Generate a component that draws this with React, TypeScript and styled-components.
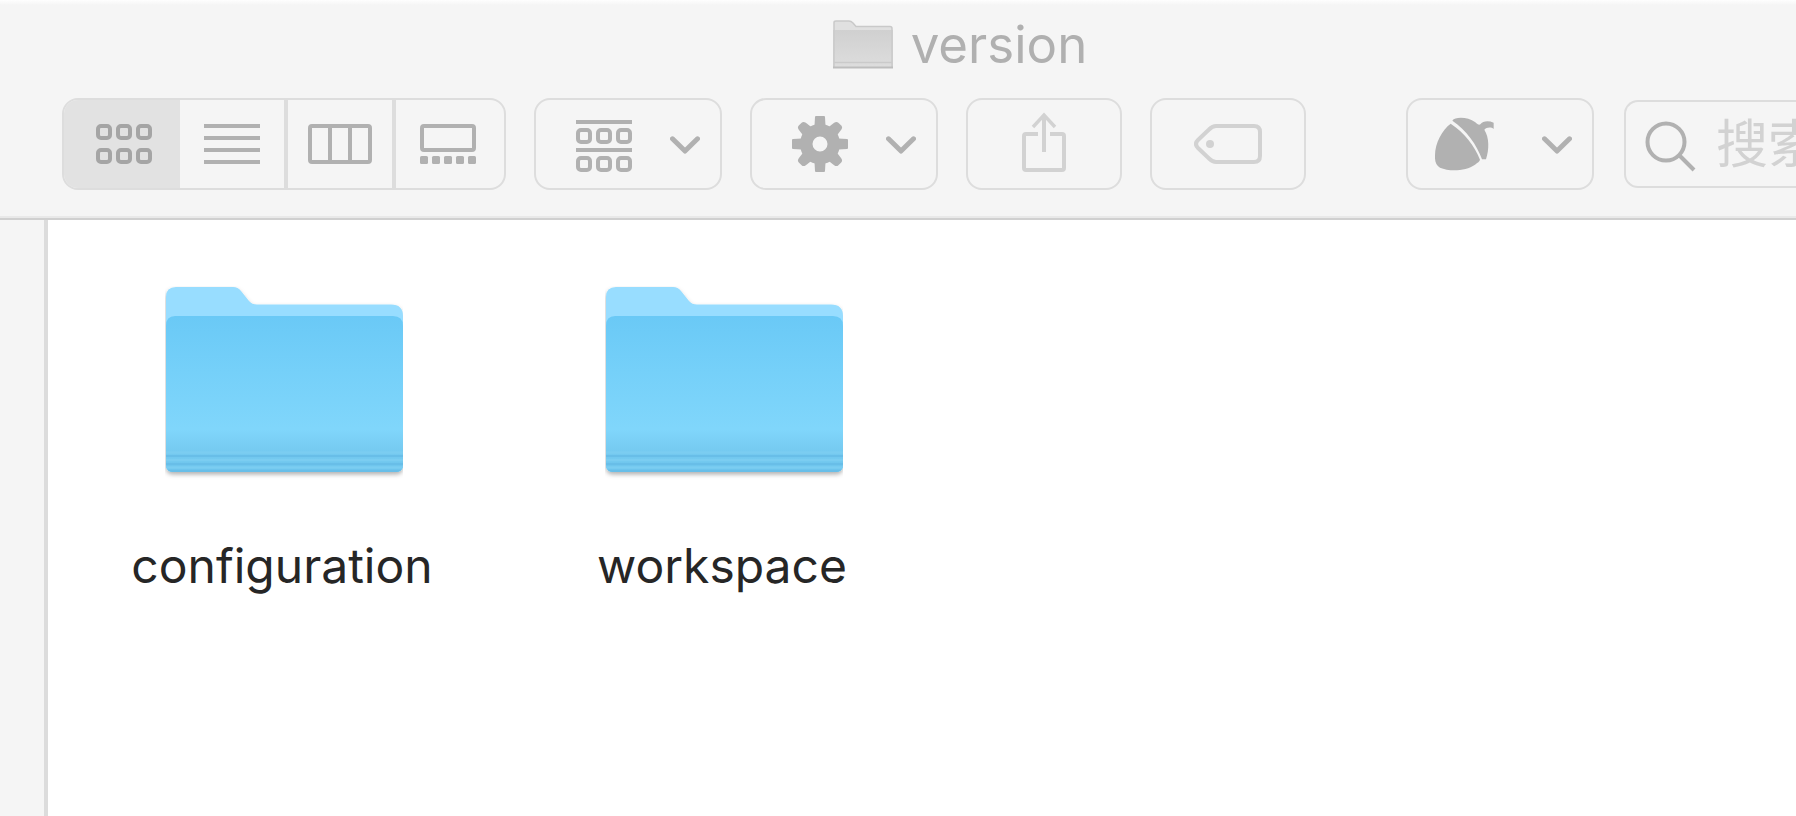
import React from "react";
import styled, { createGlobalStyle } from "styled-components";

const GlobalStyle = createGlobalStyle`
  * { box-sizing: border-box; }
  body {
    margin: 0;
    background: #fff;
    font-family: Inter, "Noto Sans CJK SC", sans-serif;
  }
`;

const Window = styled.div`
  display: flex;
  flex-direction: column;
  min-height: 100vh;
`;

const Header = styled.header`
  display: flex;
  flex-direction: column;
  gap: 8px;
  padding-bottom: 28px;
  background: linear-gradient(#fefefe, #f5f5f5 5px);
  border-bottom: 2px solid #d0d0d0;
  box-shadow: inset 0 -2px 0 #e9e9e9;
`;

const TitleBar = styled.div`
  display: flex;
  align-items: center;
  justify-content: center;
  gap: 18px;
  height: 90px;
  padding-left: 124px;
`;

const Title = styled.h1`
  margin: 0;
  font-size: 51px;
  line-height: 60px;
  font-weight: 400;
  color: #b0b0b0;
`;

const Toolbar = styled.div`
  display: flex;
  align-items: center;
  gap: 28px;
  padding-left: 62px;
`;

const Segments = styled.div`
  display: flex;
  flex: none;
  height: 92px;
  border: 2px solid #dddddd;
  border-radius: 16px;
  overflow: hidden;
`;

const Segment = styled.button<{ $active?: boolean; $divided?: boolean }>`
  display: flex;
  align-items: center;
  justify-content: center;
  width: ${(p) => (p.$active ? 116 : 108)}px;
  padding: 0;
  border: 0;
  border-right: ${(p) => (p.$divided ? "4px solid #dddddd" : "0")};
  background: ${(p) => (p.$active ? "#e2e2e2" : "transparent")};
  color: ${(p) => (p.$active ? "#a5a5a5" : "#b1b1b1")};

  &:first-child {
    padding-left: 4px;
  }

  &:last-child {
    padding-right: 4px;
  }
`;

const ToolButton = styled.button<{ $menu?: boolean; $faint?: boolean; $wide?: boolean }>`
  display: flex;
  flex: none;
  align-items: center;
  justify-content: ${(p) => (p.$menu ? "space-between" : "center")};
  width: ${(p) => (p.$menu ? 188 : 156)}px;
  height: 92px;
  padding: ${(p) => (p.$menu ? `0 20px 0 ${p.$wide ? 27 : 40}px` : "0")};
  border: 2px solid #dddddd;
  border-radius: 16px;
  background: transparent;
  color: ${(p) => (p.$faint ? "#d2d2d2" : "#b1b1b1")};
`;

const Extras = styled.div`
  display: flex;
  flex: 1;
  align-items: center;
  gap: 30px;
  min-width: 0;
  margin-left: 72px;
`;

const SearchField = styled.label`
  display: flex;
  flex: 1;
  align-items: center;
  gap: 20px;
  min-width: 0;
  height: 88px;
  padding-left: 18px;
  border: 2px solid #dddddd;
  border-right: 0;
  border-radius: 14px 0 0 14px;
  color: #b1b1b1;

  svg {
    flex: none;
  }
`;

const SearchInput = styled.input`
  flex: 1;
  min-width: 0;
  height: 80px;
  padding: 0;
  border: 0;
  outline: 0;
  background: transparent;
  font-family: Inter, "Noto Sans CJK SC", sans-serif;
  font-size: 52px;
  color: #555;

  &::placeholder {
    color: #d2d2d2;
    opacity: 1;
  }
`;

const Body = styled.div`
  display: flex;
  flex: 1;
`;

const Sidebar = styled.aside`
  width: 48px;
  flex: none;
  background: #f5f5f5;
  border-right: 4px solid #dcdcdc;
`;

const Files = styled.main`
  display: flex;
  flex: 1;
  flex-wrap: wrap;
  align-content: flex-start;
  padding: 66px 0 0 16px;
`;

const File = styled.figure`
  display: flex;
  flex-direction: column;
  align-items: center;
  gap: 54px;
  width: 440px;
  margin: 0;
`;

const FileName = styled.figcaption`
  padding-right: 4px;
  font-size: 48px;
  line-height: 60px;
  color: #262626;
`;

const tiles = (y: number) =>
  [2, 22, 42].map((x) => (
    <rect key={`${x}-${y}`} x={x} y={y} width="12" height="12" rx="3" fill="none" stroke="currentColor" strokeWidth="4" />
  ));

const GridIcon = () => (
  <svg width="56" height="40" aria-hidden="true">
    {tiles(2)}
    {tiles(26)}
  </svg>
);

const ListIcon = () => (
  <svg width="56" height="40" aria-hidden="true">
    <path d="M0 2H56M0 14H56M0 26H56M0 38H56" stroke="currentColor" strokeWidth="4" />
  </svg>
);

const ColumnsIcon = () => (
  <svg width="64" height="40" aria-hidden="true" fill="none" stroke="currentColor" strokeWidth="4">
    <rect x="2" y="2" width="60" height="36" rx="2" />
    <path d="M22 2V38M42 2V38" />
  </svg>
);

const GalleryIcon = () => (
  <svg width="56" height="40" aria-hidden="true">
    <rect x="2" y="2" width="52" height="24" rx="2" fill="none" stroke="currentColor" strokeWidth="4" />
    {[0, 12, 24, 36, 48].map((x) => (
      <rect key={x} x={x} y="32" width="8" height="8" rx="1.5" fill="currentColor" />
    ))}
  </svg>
);

const GroupIcon = () => (
  <svg width="56" height="56" aria-hidden="true">
    <path d="M0 6H56M0 34H56" stroke="currentColor" strokeWidth="4" />
    {tiles(14)}
    {tiles(42)}
  </svg>
);

const GearIcon = () => (
  <svg width="56" height="56" viewBox="-28 -28 56 56" aria-hidden="true">
    <circle r="13.75" fill="none" stroke="currentColor" strokeWidth="12.5" />
    {[0, 90, 180, 270].map((a) => (
      <path key={a} transform={`rotate(${a})`} d="M-5.5 -18L-5 -27Q-5 -28 -4 -28H4Q5 -28 5 -27L5.5 -18Z" fill="currentColor" />
    ))}
    {[45, 135, 225, 315].map((a) => (
      <path key={a} transform={`rotate(${a})`} d="M-6 -17L-5 -25Q-4.5 -28 -2 -28H2Q4.5 -28 5 -25L6 -17Z" fill="currentColor" />
    ))}
  </svg>
);

const ChevronIcon = () => (
  <svg width="30" height="20" aria-hidden="true">
    <path d="M2.5 4.800L15 17L27.5 4.800" fill="none" stroke="currentColor" strokeWidth="5" strokeLinecap="round" strokeLinejoin="round" />
  </svg>
);

const ShareIcon = () => (
  <svg width="44" height="64" aria-hidden="true" fill="none" stroke="currentColor" strokeWidth="4">
    <path d="M16 22H4Q2 22 2 24V56Q2 58 4 58H40Q42 58 42 56V24Q42 22 40 22H28" />
    <path d="M22 40V3" />
    <path d="M11 15L22 3L33 15" strokeWidth="3.4" />
  </svg>
);

const TagIcon = () => (
  <svg width="68" height="40" aria-hidden="true">
    <path
      d="M22 2H60Q66 2 66 8V32Q66 38 60 38H22Q18.500 38 15 34.500L4 24Q0 20 4 16L15 5.500Q18.500 2 22 2Z"
      fill="none"
      stroke="currentColor"
      strokeWidth="4"
    />
    <circle cx="16" cy="20" r="4" fill="currentColor" />
  </svg>
);

const AcornIcon = () => (
  <svg width="60" height="60" viewBox="165 102 180 180" aria-hidden="true" fill="currentColor">
    <path d="M212 131C187 149 165 189 165 226C164 244 168 256 180 263C208 275 257 274 285 254C293 248 299 244 300 239C284 198 252 156 212 131Z" />
    <path d="M217 122C225 110 263 110 286 127C292 132 297 137 301 133C308 123 325 121 341 128V147C333 140 319 142 313 149C328 173 328 208 318 238H306C291 195 259 150 217 122Z" />
  </svg>
);

const SearchIcon = () => (
  <svg width="52" height="56" aria-hidden="true" fill="none" stroke="currentColor" strokeWidth="4">
    <circle cx="22" cy="26" r="18.500" />
    <path d="M35 39L50 54" />
  </svg>
);

const SmallFolder = () => (
  <svg width="60" height="50" aria-hidden="true">
    <defs>
      <linearGradient id="grayFront" x2="0" y2="1">
        <stop offset="0" stopColor="#d0d0d0" />
        <stop offset="1" stopColor="#dddddd" />
      </linearGradient>
    </defs>
    <path d="M1 47V2.500Q1 1 3 1H16Q18 1 20 3L23 6.500H57Q59 6.500 59 8.500V47Z" fill="#e0e0e0" stroke="#c9c9c9" strokeWidth="1.500" />
    <rect x="1" y="10" width="58" height="37.500" fill="url(#grayFront)" />
    <path d="M1 10V47.500M59 10V47.500M1 42.500H59" stroke="#cacaca" strokeWidth="1.500" />
    <path d="M0 47.500H60" stroke="#bdbdbd" strokeWidth="2" />
  </svg>
);

const FolderIcon = () => (
  <svg width="238" height="196" aria-hidden="true">
    <defs>
      <linearGradient id="folderFront" x2="0" y2="1">
        <stop offset="0" stopColor="#6ac9f6" />
        <stop offset="0.350" stopColor="#75d0f9" />
        <stop offset="0.720" stopColor="#80d6fb" />
        <stop offset="0.860" stopColor="#75caf0" />
        <stop offset="1" stopColor="#6cc3ec" />
      </linearGradient>
      <filter id="folderShadow" x="-5%" y="-5%" width="110%" height="115%">
        <feDropShadow dx="0" dy="2.500" stdDeviation="2" floodColor="#000" floodOpacity="0.300" />
      </filter>
      <clipPath id="frontClip">
        <path d="M1 40Q1 30 10 30H228Q238 30 238 40V179Q238 186 231 186H8Q1 186 1 179Z" />
      </clipPath>
    </defs>
    <path
      d="M1 179V11Q1 1 11 1H68Q73 1 76 5L84 15Q87 18.500 92 18.500H226Q238 18.500 238 30V179Q238 186 231 186H8Q1 186 1 179Z"
      fill="#98ddff"
      filter="url(#folderShadow)"
    />
    <g clipPath="url(#frontClip)">
      <rect y="30" width="238" height="157" fill="url(#folderFront)" />
      <path d="M0 166.500H238M0 174H238M0 181.500H238" stroke="#7bcdf1" strokeWidth="2.500" />
      <path d="M0 170H238M0 178H238M0 185H238" stroke="#68bee8" strokeWidth="2" />
    </g>
  </svg>
);

const files = ["configuration", "workspace"];

export default function App() {
  return (
    <Window>
      <GlobalStyle />
      <Header>
        <TitleBar>
          <SmallFolder />
          <Title>version</Title>
        </TitleBar>
        <Toolbar>
          <Segments role="group" aria-label="View">
            <Segment $active aria-pressed="true" aria-label="Icons"><GridIcon /></Segment>
            <Segment $divided aria-pressed="false" aria-label="List"><ListIcon /></Segment>
            <Segment $divided aria-pressed="false" aria-label="Columns"><ColumnsIcon /></Segment>
            <Segment aria-pressed="false" aria-label="Gallery"><GalleryIcon /></Segment>
          </Segments>
          <ToolButton $menu aria-label="Group by"><GroupIcon /><ChevronIcon /></ToolButton>
          <ToolButton $menu aria-label="Actions"><GearIcon /><ChevronIcon /></ToolButton>
          <ToolButton $faint aria-label="Share"><ShareIcon /></ToolButton>
          <ToolButton $faint aria-label="Tags"><TagIcon /></ToolButton>
          <Extras>
            <ToolButton $menu $wide aria-label="Acorn"><AcornIcon /><ChevronIcon /></ToolButton>
            <SearchField>
              <SearchIcon />
              <SearchInput type="text" placeholder="搜索" aria-label="搜索" />
            </SearchField>
          </Extras>
        </Toolbar>
      </Header>
      <Body>
        <Sidebar />
        <Files>
          {files.map((name) => (
            <File key={name}>
              <FolderIcon />
              <FileName>{name}</FileName>
            </File>
          ))}
        </Files>
      </Body>
    </Window>
  );
}
